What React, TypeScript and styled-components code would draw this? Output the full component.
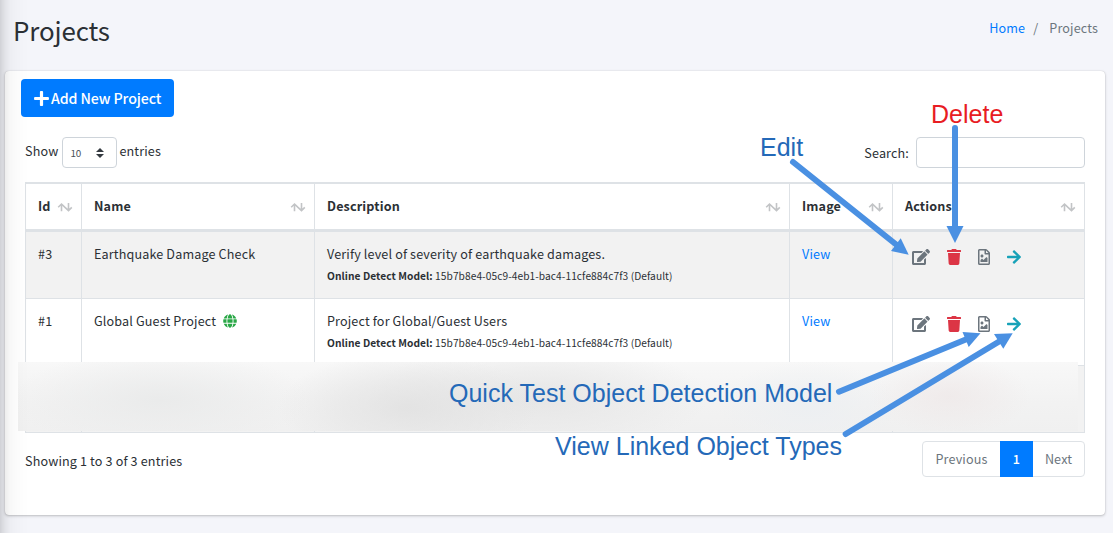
import React from "react";
import styled, { createGlobalStyle } from "styled-components";
import { FaPlus, FaGlobe, FaEdit, FaTrash, FaRegFileImage, FaArrowRight } from "react-icons/fa";

const Global = createGlobalStyle`
  *, *::before, *::after { box-sizing: border-box; }
  html, body { margin: 0; padding: 0; overflow: hidden; }
  body {
    background: #f4f6f9;
    color: #2b3035;
    font-family: "Noto Sans CJK SC", "Noto Sans", sans-serif;
    font-size: 12.6px;
    line-height: 21px;
    letter-spacing: 0.14px;
  }
`;

const Page = styled.div`
  position: relative;
  width: 1113px;
  height: 533px;
  overflow: hidden;
  background: #f4f5fa;
`;

const SidebarShadow = styled.div`
  position: absolute;
  left: -250px;
  top: -100px;
  width: 250px;
  height: 733px;
  pointer-events: none;
  box-shadow: 0 14px 28px rgba(0, 0, 0, 0.13), 0 10px 10px rgba(0, 0, 0, 0.17);
`;

const Header = styled.header`
  display: flex;
  justify-content: space-between;
  height: 71px;
  padding: 12px 15px 0 13px;
`;

const Title = styled.h1`
  margin: 0;
  font-size: 25.9px;
  font-weight: 400;
  line-height: 36px;
  letter-spacing: -0.12px;
`;

const Breadcrumb = styled.nav`
  display: flex;
  padding-top: 5px;
  color: #6c757d;
`;

const Link = styled.a`
  color: #007bff;
  text-decoration: none;
`;

const Slash = styled.span`
  padding: 0 11px 0 8px;
`;

const Card = styled.main`
  width: 1100px;
  height: 444px;
  margin-left: 5px;
  padding: 8px 20px 0;
  background: #fff;
  border-radius: 4px;
  box-shadow: 0 0 1px rgba(0, 0, 0, 0.2), 0 1px 3px rgba(0, 0, 0, 0.22);
`;

const AddButton = styled.button`
  display: flex;
  align-items: center;
  gap: 1px;
  width: 153px;
  height: 38px;
  margin-left: -4px;
  padding: 0 0 0 12px;
  border: 0;
  border-radius: 4px;
  background: #007bff;
  color: #fff;
  font: 500 14.2px/24px "Noto Sans CJK SC", sans-serif;
  letter-spacing: -0.1px;
  white-space: nowrap;
`;

const Controls = styled.div`
  display: flex;
  justify-content: space-between;
  height: 45px;
  margin-top: 20px;
`;

const Field = styled.label<{ $drop?: number }>`
  display: flex;
  align-items: flex-start;
  line-height: ${(p) => 28 + (p.$drop ?? 0) * 3}px;
`;

const Select = styled.span`
  display: flex;
  align-items: center;
  justify-content: space-between;
  width: 55px;
  height: 31px;
  margin: 0 2px 0 4px;
  padding: 1px 12px 0 7px;
  border: 1px solid #ced4da;
  border-radius: 4px;
  color: #495057;
  font-size: 9.9px;
  letter-spacing: -0.1px;
  line-height: 20px;
`;

const SearchInput = styled.input`
  width: 169px;
  height: 31px;
  margin-left: 7px;
  border: 1px solid #ced4da;
  border-radius: 4px;
  background: #fff;
`;

const Table = styled.div`
  width: 1060px;
  border-left: 1px solid #dee2e6;
`;

const Row = styled.div<{ $odd?: boolean }>`
  display: grid;
  grid-template-columns: 56px 233px 475px 103px 192px;
  height: 67px;
  border-bottom: 1px solid #dee2e6;
  background: ${(p) => (p.$odd ? "#f2f2f2" : "#fff")};
`;

const HeadRow = styled(Row)`
  height: 50px;
  border-top: 2px solid #dee2e6;
  border-bottom-width: 3px;
  font-weight: 700;
`;

const Cell = styled.div`
  padding: 11px 0 0 12px;
  border-right: 1px solid #dee2e6;
  white-space: nowrap;
`;

const HeadCell = styled(Cell)`
  display: flex;
  justify-content: space-between;
  padding: 11px 8px 0 12px;
`;

const SortIcon = styled.svg`
  width: 16px;
  height: 10px;
  margin-top: 7px;
  fill: none;
  stroke: #c2c4c6;
  stroke-width: 1.6;
`;

const Detail = styled.div`
  padding-top: 1px;
  font-size: 10.2px;
  line-height: 21px;
  letter-spacing: 0.065px;
`;

const GlobeIcon = styled(FaGlobe)`
  width: 14px;
  height: 14px;
  margin-left: 7px;
  vertical-align: -2px;
  color: #28a745;
`;

const ActionCell = styled(Cell)`
  display: flex;
  gap: 17px;
  padding: 17px 0 0 19px;
`;

const Action = styled.span<{ $w: number; $color: string }>`
  display: block;
  width: ${(p) => p.$w}px;
  height: 16px;
  color: ${(p) => p.$color};
  svg {
    display: block;
    width: 100%;
    height: 16px;
  }
`;

const Redaction = styled.div`
  position: absolute;
  left: 18px;
  top: 362px;
  width: 1060px;
  height: 69px;
  background:
    radial-gradient(ellipse 130px 56px at 390px 46px, rgba(224, 224, 224, 0.8), rgba(226, 226, 226, 0.5) 50%, rgba(240, 240, 240, 0) 100%),
    radial-gradient(ellipse 170px 56px at 520px 36px, rgba(226, 226, 226, 0.75), rgba(230, 230, 230, 0.5) 50%, rgba(240, 240, 240, 0) 100%),
    radial-gradient(ellipse 150px 50px at 142px 38px, rgba(233, 234, 234, 0.9), rgba(240, 240, 240, 0) 100%),
    radial-gradient(ellipse 80px 40px at 932px 34px, rgba(238, 231, 231, 0.7), rgba(240, 236, 236, 0) 100%),
    radial-gradient(ellipse 90px 45px at 790px 44px, rgba(236, 239, 242, 0.9), rgba(240, 240, 240, 0) 100%),
    linear-gradient(#f8f8f8, #f2f2f2 60%, #f0f0f0);
`;

const Footer = styled.div`
  display: flex;
  justify-content: space-between;
  padding-top: 8px;
`;

const Info = styled.div`
  padding-top: 9px;
`;

const Pager = styled.div`
  display: flex;
  width: 163px;
  height: 36px;
  border: 1px solid #dee2e6;
  border-radius: 4px;
`;

const PageItem = styled.span<{ $w: number; $active?: boolean }>`
  width: ${(p) => p.$w}px;
  margin: -1px 0;
  background: ${(p) => (p.$active ? "#007bff" : "transparent")};
  color: ${(p) => (p.$active ? "#fff" : "#6c757d")};
  font-weight: ${(p) => (p.$active ? 500 : 400)};
  line-height: 36px;
  text-align: center;
`;

const Arrows = styled.svg`
  position: absolute;
  left: 0;
  top: 0;
  stroke: #4a90e2;
  fill: #4a90e2;
  stroke-width: 6;
  stroke-linecap: round;
  pointer-events: none;
`;

const Note = styled.span<{ $x: number; $y: number; $red?: boolean }>`
  position: absolute;
  left: ${(p) => p.$x}px;
  top: ${(p) => p.$y}px;
  color: ${(p) => (p.$red ? "#e81c23" : "#2469b8")};
  font: 25px/30px "Liberation Sans", Arial, sans-serif;
  letter-spacing: 0.01px;
  white-space: nowrap;
`;

const projects = [
  { id: "#3", name: "Earthquake Damage Check", text: "Verify level of severity of earthquake damages.", global: false },
  { id: "#1", name: "Global Guest Project", text: "Project for Global/Guest Users", global: true },
];

const arrows = [
  { line: "M793 162 L898 246", head: "908.7,254.7 900.7,238.3 891,251" },
  { line: "M955 128 V230", head: "955,243 946.5,226 963.5,226" },
  { line: "M839 391.7 L967 339", head: "980.5,333.2 962.5,332 968.7,347" },
  { line: "M845.7 434 L1000 341", head: "1012.7,333.2 994,334 1003.3,348.8" },
];

function Sort() {
  return (
    <SortIcon viewBox="0 0 16 10">
      <path d="M4.5 9.3V2M1.2 5.2L4.5 2L8 5.4M11.5 1V8.6M8 5.4L11.5 8.6L14.8 5.4" />
    </SortIcon>
  );
}

export default function App() {
  return (
    <>
      <Global />
      <Page>
        <Header>
          <Title>Projects</Title>
          <Breadcrumb>
            <Link>Home</Link>
            <Slash>/</Slash>
            <span>Projects</span>
          </Breadcrumb>
        </Header>
        <Card>
          <AddButton>
            <FaPlus size={17} />
            Add New Project
          </AddButton>
          <Controls>
            <Field>
              Show
              <Select>
                10
                <svg width="8" height="10" viewBox="0 0 8 10" fill="#343a40">
                  <path d="M0 4L4 0L8 4ZM0 6L4 10L8 6Z" />
                </svg>
              </Select>
              entries
            </Field>
            <Field $drop={1}>
              Search:
              <SearchInput />
            </Field>
          </Controls>
          <Table>
            <HeadRow>
              {["Id", "Name", "Description", "Image", "Actions"].map((h) => (
                <HeadCell key={h}>
                  {h}
                  <Sort />
                </HeadCell>
              ))}
            </HeadRow>
            {projects.map((p, i) => (
              <Row key={p.id} $odd={i % 2 === 0}>
                <Cell>{p.id}</Cell>
                <Cell>
                  {p.name}
                  {p.global && <GlobeIcon />}
                </Cell>
                <Cell>
                  {p.text}
                  <Detail>
                    <b>Online Detect Model:</b> 15b7b8e4-05c9-4eb1-bac4-11cfe884c7f3 (Default)
                  </Detail>
                </Cell>
                <Cell>
                  <Link>View</Link>
                </Cell>
                <ActionCell>
                  <Action $w={18} $color="#6c757d"><FaEdit /></Action>
                  <Action $w={14} $color="#dc3545"><FaTrash /></Action>
                  <Action $w={12} $color="#6c757d"><FaRegFileImage /></Action>
                  <Action $w={14} $color="#17a2b8"><FaArrowRight /></Action>
                </ActionCell>
              </Row>
            ))}
            <Row $odd>
              <Cell />
              <Cell />
              <Cell />
              <Cell />
              <Cell />
            </Row>
          </Table>
          <Footer>
            <Info>Showing 1 to 3 of 3 entries</Info>
            <Pager>
              <PageItem $w={77}>Previous</PageItem>
              <PageItem $w={33} $active>1</PageItem>
              <PageItem $w={51}>Next</PageItem>
            </Pager>
          </Footer>
        </Card>
        <Redaction />
        <SidebarShadow />
        <Arrows width="1113" height="533">
          {arrows.map((a) => (
            <g key={a.line}>
              <path d={a.line} />
              <polygon points={a.head} stroke="none" />
            </g>
          ))}
        </Arrows>
        <Note $x={760} $y={132}>Edit</Note>
        <Note $x={931} $y={99} $red>Delete</Note>
        <Note $x={449} $y={378}>Quick Test Object Detection Model</Note>
        <Note $x={555} $y={431}>View Linked Object Types</Note>
      </Page>
    </>
  );
}
